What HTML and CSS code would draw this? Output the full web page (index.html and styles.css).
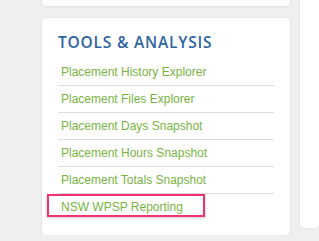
FILE: index.html
```html
<!DOCTYPE html>
<html>
<head>
<meta charset="utf-8">
<link rel="stylesheet" href="styles.css">
</head>
<body>
<div class="page">
  <div class="column">
    <div class="card card-top"></div>
    <div class="card">
      <h2 class="title">TOOLS &amp; ANALYSIS</h2>
      <ul class="links">
        <li><a href="#">Placement History Explorer</a></li>
        <li><a href="#">Placement Files Explorer</a></li>
        <li><a href="#">Placement Days Snapshot</a></li>
        <li><a href="#">Placement Hours Snapshot</a></li>
        <li><a href="#">Placement Totals Snapshot</a></li>
        <li class="highlighted"><a href="#">NSW WPSP Reporting</a></li>
      </ul>
    </div>
  </div>
  <div class="side"></div>
</div>
</body>
</html>
```
FILE: styles.css
```css
html, body {
  margin: 0;
  padding: 0;
  background: #efefef;
  overflow: hidden;
}
.page {
  display: flex;
  align-items: flex-start;
  gap: 10px;
  padding-left: 42px;
}
.column {
  width: 248px;
  flex: none;
  display: flex;
  flex-direction: column;
  gap: 12px;
  margin-top: -40px;
}
.card {
  background: #fff;
  border-radius: 4px;
  box-shadow: 0 0 0 1px #e6e6e6, 0 1px 3px rgba(0,0,0,0.08);
  padding: 0 16px 14px 16px;
}
.card-top {
  height: 46px;
  padding: 0;
}
.title {
  margin: 0;
  padding-top: 12px;
  height: 29px;
  font-family: "Open Sans", sans-serif;
  font-weight: 600;
  font-size: 15.5px;
  line-height: 24px;
  color: #2f64a2;
  letter-spacing: 0.8px;
}
.links {
  list-style: none;
  margin: 0;
  padding: 0;
}
.links li {
  border-bottom: 1px solid #dedede;
  height: 26px;
  line-height: 26px;
}
.links li:last-child {
  border-bottom: none;
  height: 27px;
}
.links a {
  display: block;
  padding-left: 3px;
  font-family: "Liberation Sans", Arial, sans-serif;
  font-size: 12px;
  color: #78b443;
  text-decoration: none;
}
.highlighted {
  position: relative;
}
.highlighted::after {
  content: "";
  position: absolute;
  left: -11px;
  top: 0;
  width: 154px;
  height: 19px;
  border: 2px solid #f5306c;
  box-shadow: 0 1px 3px rgba(0,0,0,0.2);
  pointer-events: none;
}
.side {
  flex: 1;
  height: 268px;
  margin-top: -40px;
  background: #fff;
  border-radius: 4px;
  box-shadow: 0 0 0 1px #e6e6e6;
}
```
